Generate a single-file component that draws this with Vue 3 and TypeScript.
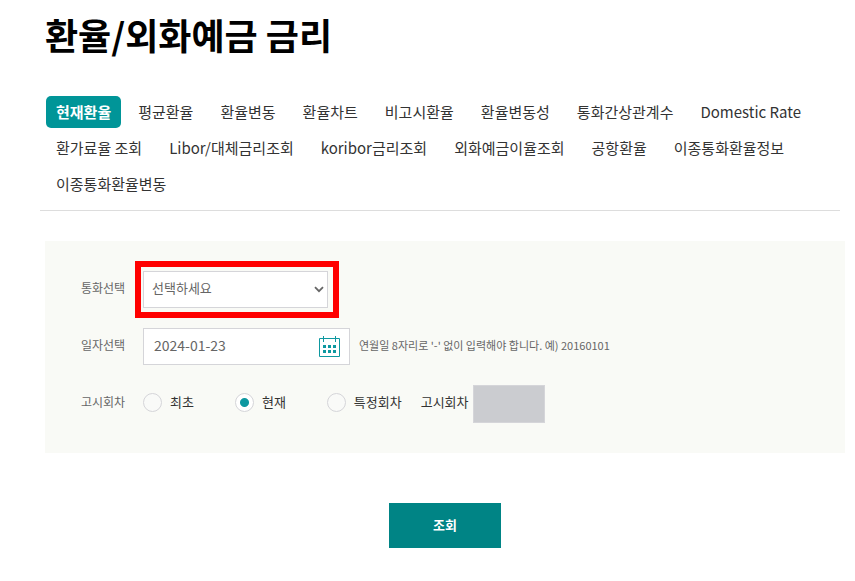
<script setup lang="ts">
import { ref } from 'vue'

const tabs: string[] = [
  '현재환율',
  '평균환율',
  '환율변동',
  '환율차트',
  '비고시환율',
  '환율변동성',
  '통화간상관계수',
  'Domestic Rate',
  '환가료율 조회',
  'Libor/대체금리조회',
  'koribor금리조회',
  '외화예금이율조회',
  '공항환율',
  '이종통화환율정보',
  '이종통화환율변동',
]

const rounds = [
  { value: 'first', label: '최초' },
  { value: 'current', label: '현재' },
  { value: 'specific', label: '특정회차' },
]

const activeTab = ref(tabs[0])
const currency = ref('')
const date = ref('2024-01-23')
const round = ref('current')
const roundNumber = ref('')
</script>

<template>
  <main class="page">
    <h1 class="title">환율/외화예금 금리</h1>

    <nav class="tabs">
      <a
        v-for="tab in tabs"
        :key="tab"
        href="#"
        class="tab"
        :class="{ active: tab === activeTab }"
        @click.prevent="activeTab = tab"
      >{{ tab }}</a>
    </nav>

    <form class="search" @submit.prevent>
      <div class="panel">
        <div class="row">
          <label class="name" for="currency">통화선택</label>
          <div class="select-box">
            <select id="currency" v-model="currency" class="field">
              <option value="">선택하세요</option>
            </select>
            <svg class="chevron" width="10" height="7" viewBox="0 0 10 7" aria-hidden="true">
              <path d="M1 1.2 5 5.2 9 1.2" fill="none" stroke="#666" stroke-width="1.8" />
            </svg>
          </div>
        </div>

        <div class="row">
          <label class="name" for="date">일자선택</label>
          <div class="date-box">
            <input id="date" v-model="date" type="text" class="field" />
            <button type="button" class="calendar" aria-label="달력">
              <svg width="21" height="21" viewBox="0 0 21 21" aria-hidden="true">
                <path d="M.5 2.5h20v18H.5zM4.5 0v6M16.5 0v6" fill="none" stroke="#0e98a0" />
                <path
                  d="M4 9h3v3H4zM9 9h3v3H9zM14 9h3v3h-3zM4 14h3v3H4zM9 14h3v3H9zM14 14h3v3h-3z"
                  fill="#0e98a0"
                />
              </svg>
            </button>
          </div>
          <p class="hint">연월일 8자리로 '-' 없이 입력해야 합니다. 예) 20160101</p>
        </div>

        <div class="row">
          <span id="round-name" class="name">고시회차</span>
          <div class="radios" role="radiogroup" aria-labelledby="round-name">
            <label v-for="item in rounds" :key="item.value" class="radio">
              <input v-model="round" type="radio" name="round" :value="item.value" />
              {{ item.label }}
            </label>
          </div>
          <label class="number-name" for="round-number">고시회차</label>
          <input id="round-number" v-model="roundNumber" type="text" class="number" disabled />
        </div>
      </div>

      <button type="submit" class="submit">조회</button>
    </form>
  </main>
</template>

<style>
body {
  margin: 0;
  background: #fff;
}
</style>

<style scoped>
.page {
  padding: 8px 10px 32px 40px;
  font-family: 'Noto Sans CJK KR', 'Noto Sans', sans-serif;
  color: #333;
}

.title {
  margin: 0 0 36px 5px;
  font-size: 36px;
  font-weight: 700;
  line-height: 52px;
  color: #000;
}

.tabs {
  display: flex;
  flex-wrap: wrap;
  gap: 4px 7px;
  margin-right: 5px;
  padding: 0 6px 10px;
  border-bottom: 1px solid #ddd;
}

.tab {
  padding: 0 10px;
  border-radius: 5px;
  font-size: 15px;
  line-height: 32px;
  color: #333;
  text-decoration: none;
}

.tab.active {
  background: #009598;
  color: #fff;
  font-weight: 700;
}

.search {
  display: flex;
  flex-direction: column;
  align-items: center;
  gap: 50px;
  margin: 30px 0 0 5px;
}

.panel {
  box-sizing: border-box;
  width: 100%;
  display: flex;
  flex-direction: column;
  gap: 20px;
  padding: 30px 36px 31px;
  background: #f9faf6;
}

.row {
  display: flex;
  align-items: center;
  height: 37px;
  font-size: 13px;
}

.name {
  width: 62px;
  padding-bottom: 3px;
  font-size: 12px;
  line-height: 18px;
  color: #666;
}

.select-box,
.date-box {
  position: relative;
  display: flex;
  align-items: center;
}

.select-box {
  width: 185px;
}

.date-box {
  width: 207px;
}

.select-box::after {
  content: '';
  position: absolute;
  inset: -10px -11px -10px -8px;
  border: 6px solid #f00;
  pointer-events: none;
}

.field {
  box-sizing: border-box;
  width: 100%;
  height: 37px;
  margin: 0;
  padding: 0 8px 4px;
  border: 1px solid #d5d5d9;
  border-radius: 0;
  background: #fff;
  appearance: none;
  font-family: inherit;
  font-size: 13px;
  color: #666;
}

.date-box .field {
  padding: 0 40px 4px 10px;
  font-size: 14px;
}

.chevron {
  position: absolute;
  right: 4px;
  pointer-events: none;
}

.calendar {
  position: absolute;
  right: 10px;
  display: flex;
  padding: 0;
  border: 0;
  background: none;
  cursor: pointer;
}

.hint {
  margin: 0 0 0 9px;
  padding-bottom: 3px;
  font-size: 11px;
  line-height: 18px;
  color: #666;
}

.radios {
  display: flex;
  gap: 41px;
  padding-bottom: 3px;
}

.radio {
  display: flex;
  align-items: center;
  gap: 8px;
  line-height: 20px;
}

.radio input {
  box-sizing: border-box;
  width: 19px;
  height: 19px;
  margin: 0;
  border: 1px solid #d5d5d9;
  border-radius: 50%;
  background: #f9faf8;
  appearance: none;
}

.radio input:checked {
  background: radial-gradient(circle, #0e98a0 4px, #fff 5px);
}

.number-name {
  margin: 0 4px 0 19px;
  padding-bottom: 3px;
  line-height: 20px;
}

.number {
  box-sizing: border-box;
  width: 72px;
  height: 38px;
  padding: 0 8px;
  border: 1px solid #d5d5d9;
  border-radius: 0;
  background: #cbccd0;
  font: inherit;
}

.submit {
  width: 112px;
  height: 45px;
  padding: 0 0 3px;
  border: 0;
  background: #008485;
  font-family: inherit;
  font-size: 13px;
  font-weight: 700;
  color: #fff;
  cursor: pointer;
}
</style>
